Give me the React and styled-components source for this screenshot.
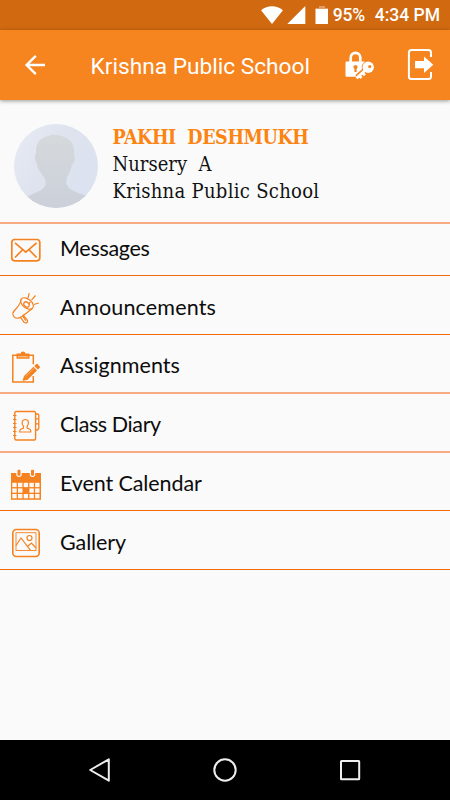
import styled, { createGlobalStyle } from 'styled-components';

const menu = [
  { title: 'Messages', icon: MailIcon, height: 52, spacing: -0.3 },
  { title: 'Announcements', icon: MegaphoneIcon, height: 59, spacing: 0.15 },
  { title: 'Assignments', icon: ClipboardIcon, height: 59, soft: true, spacing: 0.05 },
  { title: 'Class Diary', icon: DiaryIcon, height: 59, soft: true, spacing: -0.4 },
  { title: 'Event Calendar', icon: CalendarIcon, height: 58, spacing: -0.1 },
  { title: 'Gallery', icon: GalleryIcon, height: 59, spacing: -0.1 },
];

export default function App() {
  return (
    <>
      <GlobalStyle />
      <Screen>
        <StatusBar>
          <StatusIcons />
          <Battery>95%</Battery>
          <Clock>4:34 PM</Clock>
        </StatusBar>
        <Header>
          <BackIcon />
          <Title>Krishna Public School</Title>
          <LockIcon />
          <ExitIcon />
        </Header>
        <Profile>
          <Avatar />
          <Info>
            <Name>PAKHI&nbsp; DESHMUKH</Name>
            <Grade>Nursery&nbsp; A</Grade>
            <School>Krishna Public School</School>
          </Info>
        </Profile>
        <Menu>
          {menu.map(({ title, icon: Icon, height, soft, spacing }) => (
            <Item key={title} $height={height} $soft={soft}>
              <Icon />
              <Label $spacing={spacing}>{title}</Label>
            </Item>
          ))}
        </Menu>
        <NavBar>
          <NavIcon viewBox="0 0 26 26"><path d="M3.2 13L21.8 2.3v21.4z" /></NavIcon>
          <NavIcon viewBox="0 0 26 26"><circle cx="13" cy="13" r="10.7" /></NavIcon>
          <NavIcon viewBox="0 0 26 26"><rect x="4" y="4" width="18.2" height="18.2" rx="0.5" /></NavIcon>
        </NavBar>
      </Screen>
    </>
  );
}

function StatusIcons() {
  return (
    <svg width="70" height="20" viewBox="260 5 70 20" fill="#fff">
      <path d="M261 10.2C267.500 4.900 276.500 4.900 283 10.200L272 24z" />
      <path d="M305.300 6v18h-18z" />
      <path d="M319 6h6v2h-6z M315.500 8h12.500v1.500h-12.500z" opacity="0.35" />
      <path d="M315.500 9h12.500v15h-12.500z" />
    </svg>
  );
}

function BackIcon() {
  return (
    <svg width="22" height="22" viewBox="24 54 22 22" fill="none" stroke="#fff" strokeWidth="2.4">
      <path d="M45 65H27M35.800 55.800L26.600 65l9.200 9.200" />
    </svg>
  );
}

function LockIcon() {
  return (
    <Lock viewBox="344 49 32 32">
      <path d="M350.700 63v-5.200a4.800 5 0 0 1 9.600 0V63" fill="none" stroke="#fff" strokeWidth="2.700" />
      <path d="M346.700 61.600h17.700q1.200 0 1.200 1.200v2.500l-9.200 11.500h-9.700q-1.200 0-1.200-1.200V62.800q0-1.200 1.200-1.200z" fill="#fff" />
      <path d="M355.500 65a2.100 2.100 0 0 1 1.100 3.900v3.100h-2.200v-3.100a2.100 2.100 0 0 1 1.100-3.900z" fill="#f6841f" />
      <path d="M365.300 69.500L357 77.200" stroke="#f6841f" strokeWidth="5" />
      <circle cx="368.200" cy="67.300" r="6.500" fill="#f6841f" />
      <path d="M366 69.500L356.500 78.300M359.500 76l2 2M362.700 73l2.200 2.200" stroke="#fff" strokeWidth="2.800" />
      <circle cx="368.200" cy="67.300" r="5.700" fill="#fff" />
      <circle cx="369.700" cy="66.600" r="1.600" fill="#f6841f" />
    </Lock>
  );
}

function ExitIcon() {
  return (
    <svg width="28" height="34" viewBox="407 48 28 34">
      <path d="M431 57v-4.500q0-2.500-2.500-2.500h-17q-2.600 0-2.600 2.500v24q0 2.500 2.600 2.500h17q2.500 0 2.500-2.500V72" fill="none" stroke="#fff" strokeWidth="2" />
      <path d="M415 61h9v-4.500l9.300 8.200-9.300 8.300v-4.700h-9z" fill="#fff" />
    </svg>
  );
}

function Avatar() {
  return (
    <svg width="84" height="84" viewBox="14 124 84 84">
      <defs>
        <linearGradient id="sky" x1="0" y1="0" x2="1" y2="0.6">
          <stop offset="0" stopColor="#e7ebf4" />
          <stop offset="0.5" stopColor="#dee3ee" />
          <stop offset="1" stopColor="#dde2f1" />
        </linearGradient>
        <linearGradient id="person" x1="0" y1="0" x2="0" y2="1">
          <stop offset="0" stopColor="#d5d9dc" />
          <stop offset="1" stopColor="#cbd0d9" />
        </linearGradient>
        <clipPath id="round"><circle cx="56" cy="166" r="42" /></clipPath>
      </defs>
      <g clipPath="url(#round)">
        <path d="M14 124h84v84H14z" fill="url(#sky)" />
        <path
          d="M27 197C34 193 44 190 45.500 185C46.500 180 44 177 41 173C37.500 169 37.500 166 36.500 163C34.500 160 34.500 156 36 153C35.500 143 40 138 47 136.500C52 133.500 60 135 64 137C72 140 75 146 74 155C76 159 74 163 72 165C71 170 69 174 67 177C66 182 66 185 69 188C74 192 80 193 86 196L92 212H22V199z"
          fill="url(#person)"
        />
      </g>
    </svg>
  );
}

function MailIcon() {
  return (
    <LineIcon viewBox="10 233.500 32 32">
      <rect x="11.800" y="239" width="28" height="21.300" rx="3" strokeWidth="1.700" />
      <path d="M15 242.300l10.800 9.400 10.800-9.400M15 257l7.800-8M36.600 257l-7.800-8" strokeWidth="1.700" />
    </LineIcon>
  );
}

function MegaphoneIcon() {
  return (
    <LineIcon viewBox="10 292 32 32" strokeWidth="1.200">
      <ellipse cx="27" cy="303.500" rx="7.300" ry="4.500" transform="rotate(38 27 303.500)" />
      <path d="M21 299.500C20.500 305 17 307.500 14 311C11.500 314 14 318.800 18 318.200C23 317 27 312 32.500 308.500" />
      <ellipse cx="26.500" cy="304.500" rx="3" ry="2.300" transform="rotate(38 26.500 304.500)" />
      <path d="M28 304l2.500-2M20.500 317.300l3.600 5q2 1.500 3.300-.5.500-1-.2-2l-4.400-5.200M22.500 316l3.300 4.600M28 298l1.200-4.800M31.500 300.200l4-4.700M33.800 304.500l5-1.500" />
    </LineIcon>
  );
}

function ClipboardIcon() {
  return (
    <LineIcon viewBox="10 350.500 32 32">
      <path d="M17 354.700h-4.200v26.800h20.500v-6M29 354.700h4.300v9" strokeWidth="1.500" />
      <path d="M16.500 353h4q.3-2 2.500-2t2.500 2h4v5.300h-13z" fill="#f58220" stroke="none" />
      <path d="M18 356.300h10" stroke="#fcd1ac" strokeWidth="1" />
      <path d="M24 375.500l9.500-9.200 3.500 3.600-9.500 9.300-5 1.300zM34.300 365.500l2-1.900q.6-.5 1.200 0l2.300 2.400q.5.600 0 1.200l-2 1.900z" fill="#f58220" stroke="none" />
      <path d="M25.300 376.300l9-8.700" stroke="#fcc08c" strokeWidth="0.700" />
    </LineIcon>
  );
}

function DiaryIcon() {
  return (
    <LineIcon viewBox="10 409.500 32 32" strokeWidth="1.400">
      <rect x="14.800" y="411" width="20.800" height="28.500" rx="1.500" />
      <path d="M13 415h3.500M13 419h3.500M13 423h3.500M13 427h3.500M13 431h3.500M13 435h3.500" strokeWidth="1.200" />
      <path d="M36 413.500h1.500q1.300 0 1.300 1.500v13l-1.300 1.500H36M36 418.300h2.500M36 423.300h2.500" strokeWidth="1.300" />
      <path d="M23.500 427.500v-1.500c-2.500-3-1.500-7 1.800-7s4.300 4 1.800 7v1.500l3 1.400q.7.700.7 2.600H19.700q0-1.900.8-2.600z" strokeWidth="1.200" />
    </LineIcon>
  );
}

function CalendarIcon() {
  const columns = [0, 1, 2, 3, 4];
  return (
    <LineIcon viewBox="10 468.500 32 32" stroke="none">
      <path d="M11 472.500h30v26.800H11z" fill="#f58220" />
      <path d="M16.300 471h5.400v4q-2.700 3-5.400 0zM29.800 471h5.400v4q-2.700 3-5.400 0z" fill="#fafafa" />
      <rect x="17.500" y="469.300" width="3" height="6" rx="1" fill="#f58220" />
      <rect x="31" y="469.300" width="3" height="6" rx="1" fill="#f58220" />
      {columns.map(col => [0, 1, 2].map(row => (
        (col === 2 && row === 1) ? null :
          <rect key={`${col}-${row}`} x={12.300 + col * 5.700} y={482.300 + row * 5.600} width="4.400" height="4.300" fill="#fff8f2" />
      )))}
    </LineIcon>
  );
}

function GalleryIcon() {
  return (
    <LineIcon viewBox="10 527 32 32">
      <rect x="12.800" y="529.500" width="26.400" height="27" rx="3.500" strokeWidth="1.600" />
      <rect x="16" y="532.700" width="20" height="17.800" strokeWidth="0.900" />
      <path d="M16 545.500l5-7.500 9.500 12.300M27.500 546.500l4-3.500 4.500 5" strokeWidth="1.200" />
      <circle cx="29.500" cy="538" r="2.500" strokeWidth="1.200" />
    </LineIcon>
  );
}

const GlobalStyle = createGlobalStyle`
  body {
    margin: 0;
    background-color: #fafafa;
  }
`;

const Screen = styled.div`
  display: flex;
  flex-direction: column;
  width: 450px;
  height: 800px;
  overflow: hidden;
  background-color: #fafafa;
  font-family: Roboto, sans-serif;
`;

const StatusBar = styled.div`
  display: flex;
  align-items: center;
  justify-content: flex-end;
  box-sizing: border-box;
  height: 30px;
  padding-right: 10px;
  background-color: #d16910;
  color: #fff;
  font-size: 17.500px;
  font-weight: 500;
  line-height: 32px;
`;

const Battery = styled.span`
  width: 42px;
  margin-left: 3px;
  letter-spacing: -0.2px;
`;

const Clock = styled.span`
  white-space: nowrap;
`;

const Header = styled.header`
  display: flex;
  align-items: center;
  box-sizing: border-box;
  flex-shrink: 0;
  height: 70px;
  padding-left: 24px;
  background-color: #f6841f;
  box-shadow: 0 1px 4px rgba(0, 0, 0, 0.4);
`;

const Title = styled.h1`
  width: 253px;
  margin: 2px 0 0 44.500px;
  color: #fff;
  font-size: 22.700px;
  font-weight: 400;
  white-space: nowrap;
`;

const Lock = styled.svg`
  width: 32px;
  height: 32px;
  margin: 0 31px 0 0;
`;

const Profile = styled.section`
  display: flex;
  box-sizing: border-box;
  flex-shrink: 0;
  height: 124px;
  padding: 24px 14px 0;
  gap: 14.500px;
  border-bottom: 2px solid #f7ab82;
`;

const Info = styled.div`
  margin-top: 1px;
  color: #111;
  font-family: 'DejaVu Serif Condensed', 'DejaVu Serif', serif;
  font-stretch: condensed;
  font-size: 20px;
  line-height: 26.300px;
  white-space: nowrap;
`;

const Name = styled.div`
  color: #fb8412;
  font-size: 19.500px;
  font-weight: 700;
  letter-spacing: -0.4px;
`;

const Grade = styled.div``;

const School = styled.div`
  letter-spacing: 0.3px;
`;

const Menu = styled.nav`
  display: flex;
  flex-direction: column;
  flex: 1;
`;

const Item = styled.div`
  display: flex;
  align-items: center;
  box-sizing: border-box;
  height: ${({ $height }) => $height}px;
  padding: 6px 10px 0;
  gap: 18px;
  border-bottom: ${({ $soft }) => $soft ? '2px solid #f7ab82' : '1px solid #f06a08'};

  &:first-child {
    padding-top: 0;
  }
`;

const Label = styled.span`
  margin-bottom: 3px;
  color: #0c0c0c;
  font-family: Lato, sans-serif;
  font-size: 21.500px;
  line-height: 30px;
  letter-spacing: ${({ $spacing }) => $spacing}px;
`;

const LineIcon = styled.svg.attrs(({ stroke }) => ({ fill: 'none', stroke: stroke || '#f58220' }))`
  width: 32px;
  height: 32px;
`;

const NavBar = styled.footer`
  display: flex;
  align-items: center;
  justify-content: center;
  flex-shrink: 0;
  height: 60px;
  gap: 99px;
  background-color: #000;
`;

const NavIcon = styled.svg`
  width: 26px;
  height: 26px;
  fill: none;
  stroke: #eee;
  stroke-width: 2;
  stroke-linejoin: round;
`;
